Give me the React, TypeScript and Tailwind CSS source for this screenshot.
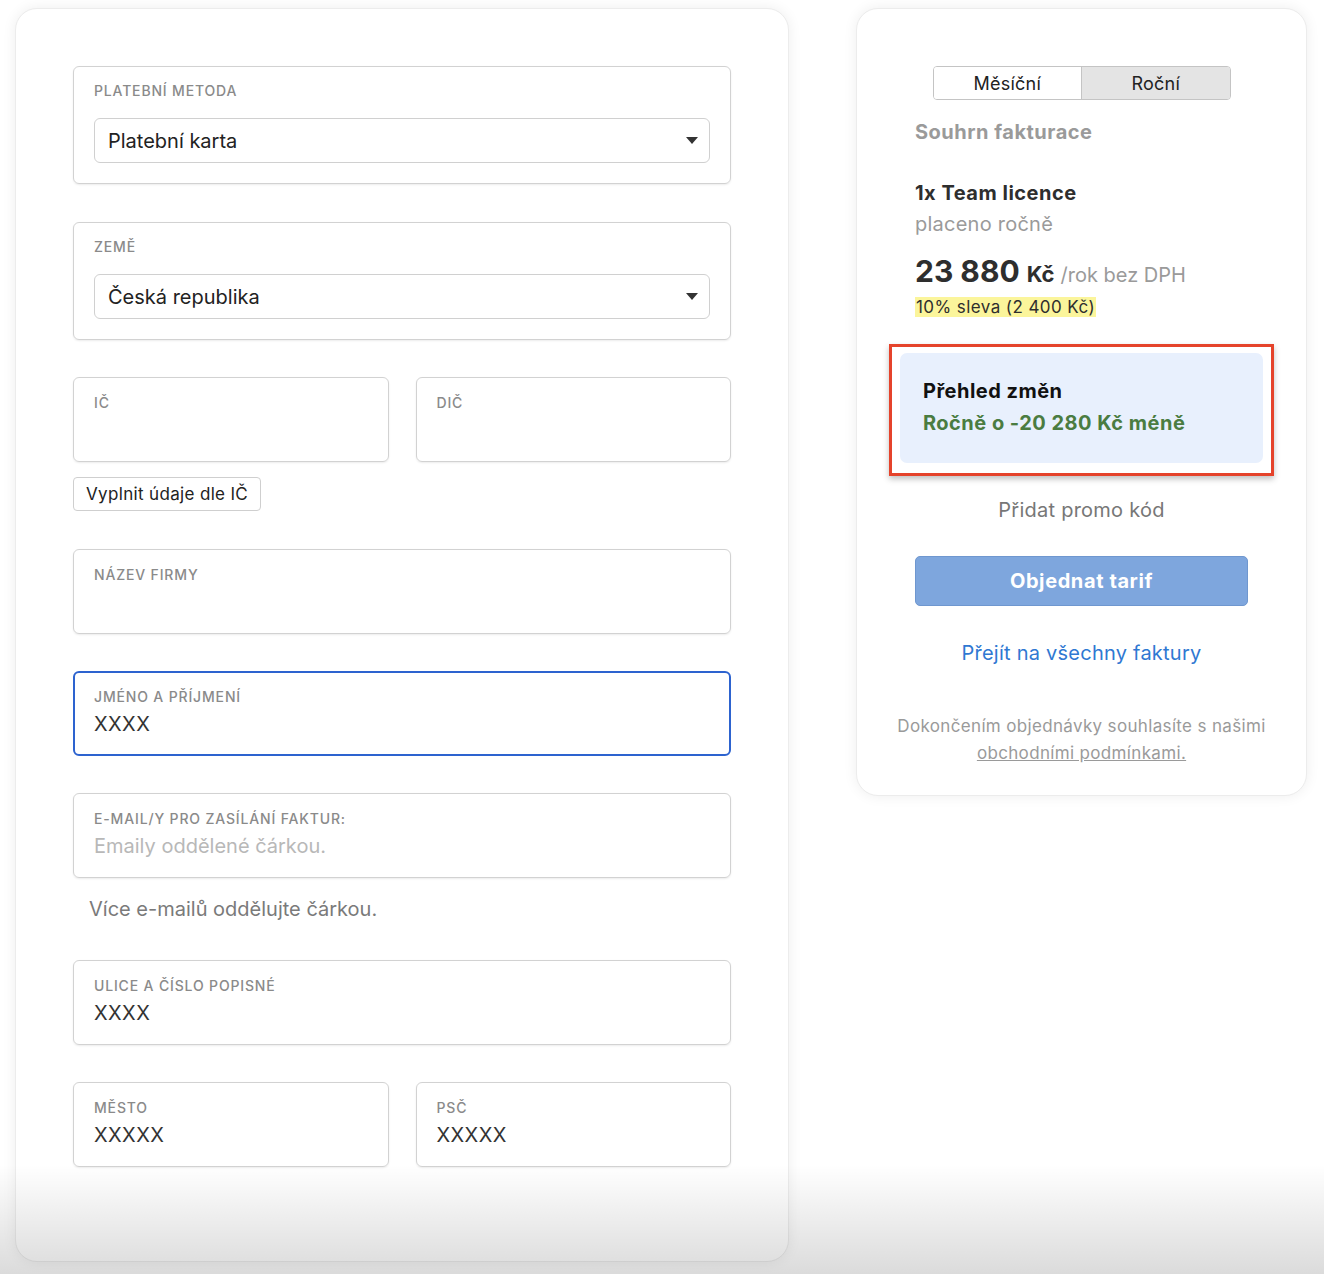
import React from "react";

function Label({ children }: { children: React.ReactNode }) {
  return (
    <div className="text-[14px] leading-[16px] font-medium tracking-[0.06em] text-[#8a8a8a] uppercase">
      {children}
    </div>
  );
}

function SelectField({ label, value }: { label: string; value: string }) {
  return (
    <div className="rounded-[6px] border border-[#d2d2d2] shadow-[0_1px_2px_rgba(0,0,0,0.08)] px-5 pt-[16px] pb-[20px]">
      <Label>{label}</Label>
      <div className="mt-[19px] h-[45px] rounded-[6px] border border-[#d0d0d0] flex items-center justify-between pl-[13px] pr-[11px]">
        <span className="text-[20px] text-[#222]">{value}</span>
        <svg width="12" height="7" viewBox="0 0 12 7">
          <path d="M0 0 L12 0 L6 7 Z" fill="#333" />
        </svg>
      </div>
    </div>
  );
}

function TextField({
  label,
  value,
  placeholder,
  focused,
}: {
  label: string;
  value?: string;
  placeholder?: string;
  focused?: boolean;
}) {
  return (
    <div
      className={
        focused
          ? "h-[85px] rounded-[6px] border-2 border-[#2d63cf] px-[19px] pt-[16px]"
          : "h-[85px] rounded-[6px] border border-[#d2d2d2] shadow-[0_1px_2px_rgba(0,0,0,0.08)] px-5 pt-[17px]"
      }
    >
      <Label>{label}</Label>
      {value && <div className="mt-[7px] text-[20px] leading-[24px] tracking-[0.02em] text-[#333]">{value}</div>}
      {placeholder && <div className="mt-[7px] text-[20px] leading-[24px] text-[#b8b8b8]">{placeholder}</div>}
    </div>
  );
}

export default function App() {
  return (
    <div
      className="relative h-[1274px] w-[1324px] overflow-hidden bg-white"
      style={{ fontFamily: "Inter, 'Liberation Sans', sans-serif" }}
    >
      <div className="flex items-start pt-[8px] pl-[15px] gap-[67px]">
        {/* Billing form */}
        <div className="w-[774px] h-[1254px] rounded-[22px] bg-white border border-[#ececec] shadow-[0_0_14px_rgba(0,0,0,0.07)] px-[57px] pt-[57px]">
          <SelectField label="Platební metoda" value="Platební karta" />
          <div className="mt-[38px]">
            <SelectField label="Země" value="Česká republika" />
          </div>
          <div className="mt-[37px] grid grid-cols-2 gap-[27px]">
            <TextField label="IČ" />
            <TextField label="DIČ" />
          </div>
          <button className="mt-[15px] h-[34px] px-[12px] pt-[2px] rounded-[4px] border border-[#cfcfcf] bg-white text-[17px] tracking-[0.02em] text-[#222]">
            Vyplnit údaje dle IČ
          </button>
          <div className="mt-[38px]">
            <TextField label="Název firmy" />
          </div>
          <div className="mt-[37px]">
            <TextField label="Jméno a příjmení" value="XXXX" focused />
          </div>
          <div className="mt-[37px]">
            <TextField label="E-mail/y pro zasílání faktur:" placeholder="Emaily oddělené čárkou." />
          </div>
          <div className="mt-[19px] pl-[16px] text-[20px] leading-[24px] text-[#7a7a7a]">
            Více e-mailů oddělujte čárkou.
          </div>
          <div className="mt-[39px]">
            <TextField label="Ulice a číslo popisné" value="XXXX" />
          </div>
          <div className="mt-[37px] grid grid-cols-2 gap-[27px]">
            <TextField label="Město" value="XXXXX" />
            <TextField label="PSČ" value="XXXXX" />
          </div>
        </div>

        {/* Summary */}
        <div className="w-[451px] rounded-[22px] bg-white border border-[#ececec] shadow-[0_0_14px_rgba(0,0,0,0.07)] px-[58px] pt-[57px] pb-[28px] tracking-[0.015em]">
          <div className="mx-auto flex w-[298px] h-[34px] rounded-[4px] border border-[#c4c4c4] overflow-hidden text-[18px] text-[#222]">
            <div className="flex-1 flex items-center justify-center bg-white border-r border-[#c4c4c4]">Měsíční</div>
            <div className="flex-1 flex items-center justify-center bg-[#e4e4e4]">Roční</div>
          </div>
          <div className="mt-[20px] text-[20px] leading-[24px] font-bold tracking-[0.025em] text-[#9a9a9a]">Souhrn fakturace</div>
          <div className="mt-[34px] text-[20px] leading-[31px] font-bold tracking-[0.025em] text-[#2e2e2e]">1x Team licence</div>
          <div className="text-[20px] leading-[31px] text-[#9a9a9a]">placeno ročně</div>
          <div className="mt-[12px] leading-[38px] whitespace-nowrap tracking-normal">
            <span className="text-[30px] font-bold text-[#2e2e2e]">23 880</span>
            <span className="text-[22px] font-bold text-[#2e2e2e] ml-[7px]">Kč</span>
            <span className="text-[20px] text-[#9a9a9a] ml-[6px]">/rok bez DPH</span>
          </div>
          <div className="mt-[1px] leading-[22px]">
            <span className="bg-[#fbf59b] text-[17px] tracking-[0.025em] text-[#2e2e2e] px-[1px]">10% sleva (2 400 Kč)</span>
          </div>

          <div className="mt-[26px] -mx-[26px] border-[3px] border-[#e5432b] px-[8px] pt-[6px] pb-[10px] shadow-[0_3px_6px_rgba(0,0,0,0.25)]">
            <div className="rounded-[7px] bg-[#e8f0fd] pl-[23px] pt-[26px] pb-[28px] tracking-[0.03em]">
              <div className="text-[20px] leading-[24px] font-bold text-[#111]">Přehled změn</div>
              <div className="mt-[8px] text-[20px] leading-[24px] font-bold text-[#4a7c41]">Ročně o -20 280 Kč méně</div>
            </div>
          </div>

          <div className="mt-[22px] text-center text-[20px] leading-[24px] text-[#777]">Přidat promo kód</div>
          <button className="mt-[34px] w-full h-[50px] rounded-[5px] bg-[#7ea6dd] border border-[#6f97cf] text-white text-[20px] font-bold tracking-[0.03em]">
            Objednat tarif
          </button>
          <div className="mt-[35px] text-center text-[20px] leading-[24px] text-[#2f78d2]">Přejít na všechny faktury</div>
          <div className="mt-[48px] -mx-[40px] whitespace-nowrap text-center text-[17px] leading-[27px] tracking-[0.02em] text-[#9a9a9a]">
            Dokončením objednávky souhlasíte s našimi
            <br />
            <span className="underline">obchodními podmínkami.</span>
          </div>
        </div>
      </div>

      {/* bottom fade */}
      <div className="pointer-events-none absolute inset-x-0 bottom-0 h-[110px] bg-gradient-to-b from-[rgba(0,0,0,0)] to-[rgba(0,0,0,0.14)]" />
    </div>
  );
}
